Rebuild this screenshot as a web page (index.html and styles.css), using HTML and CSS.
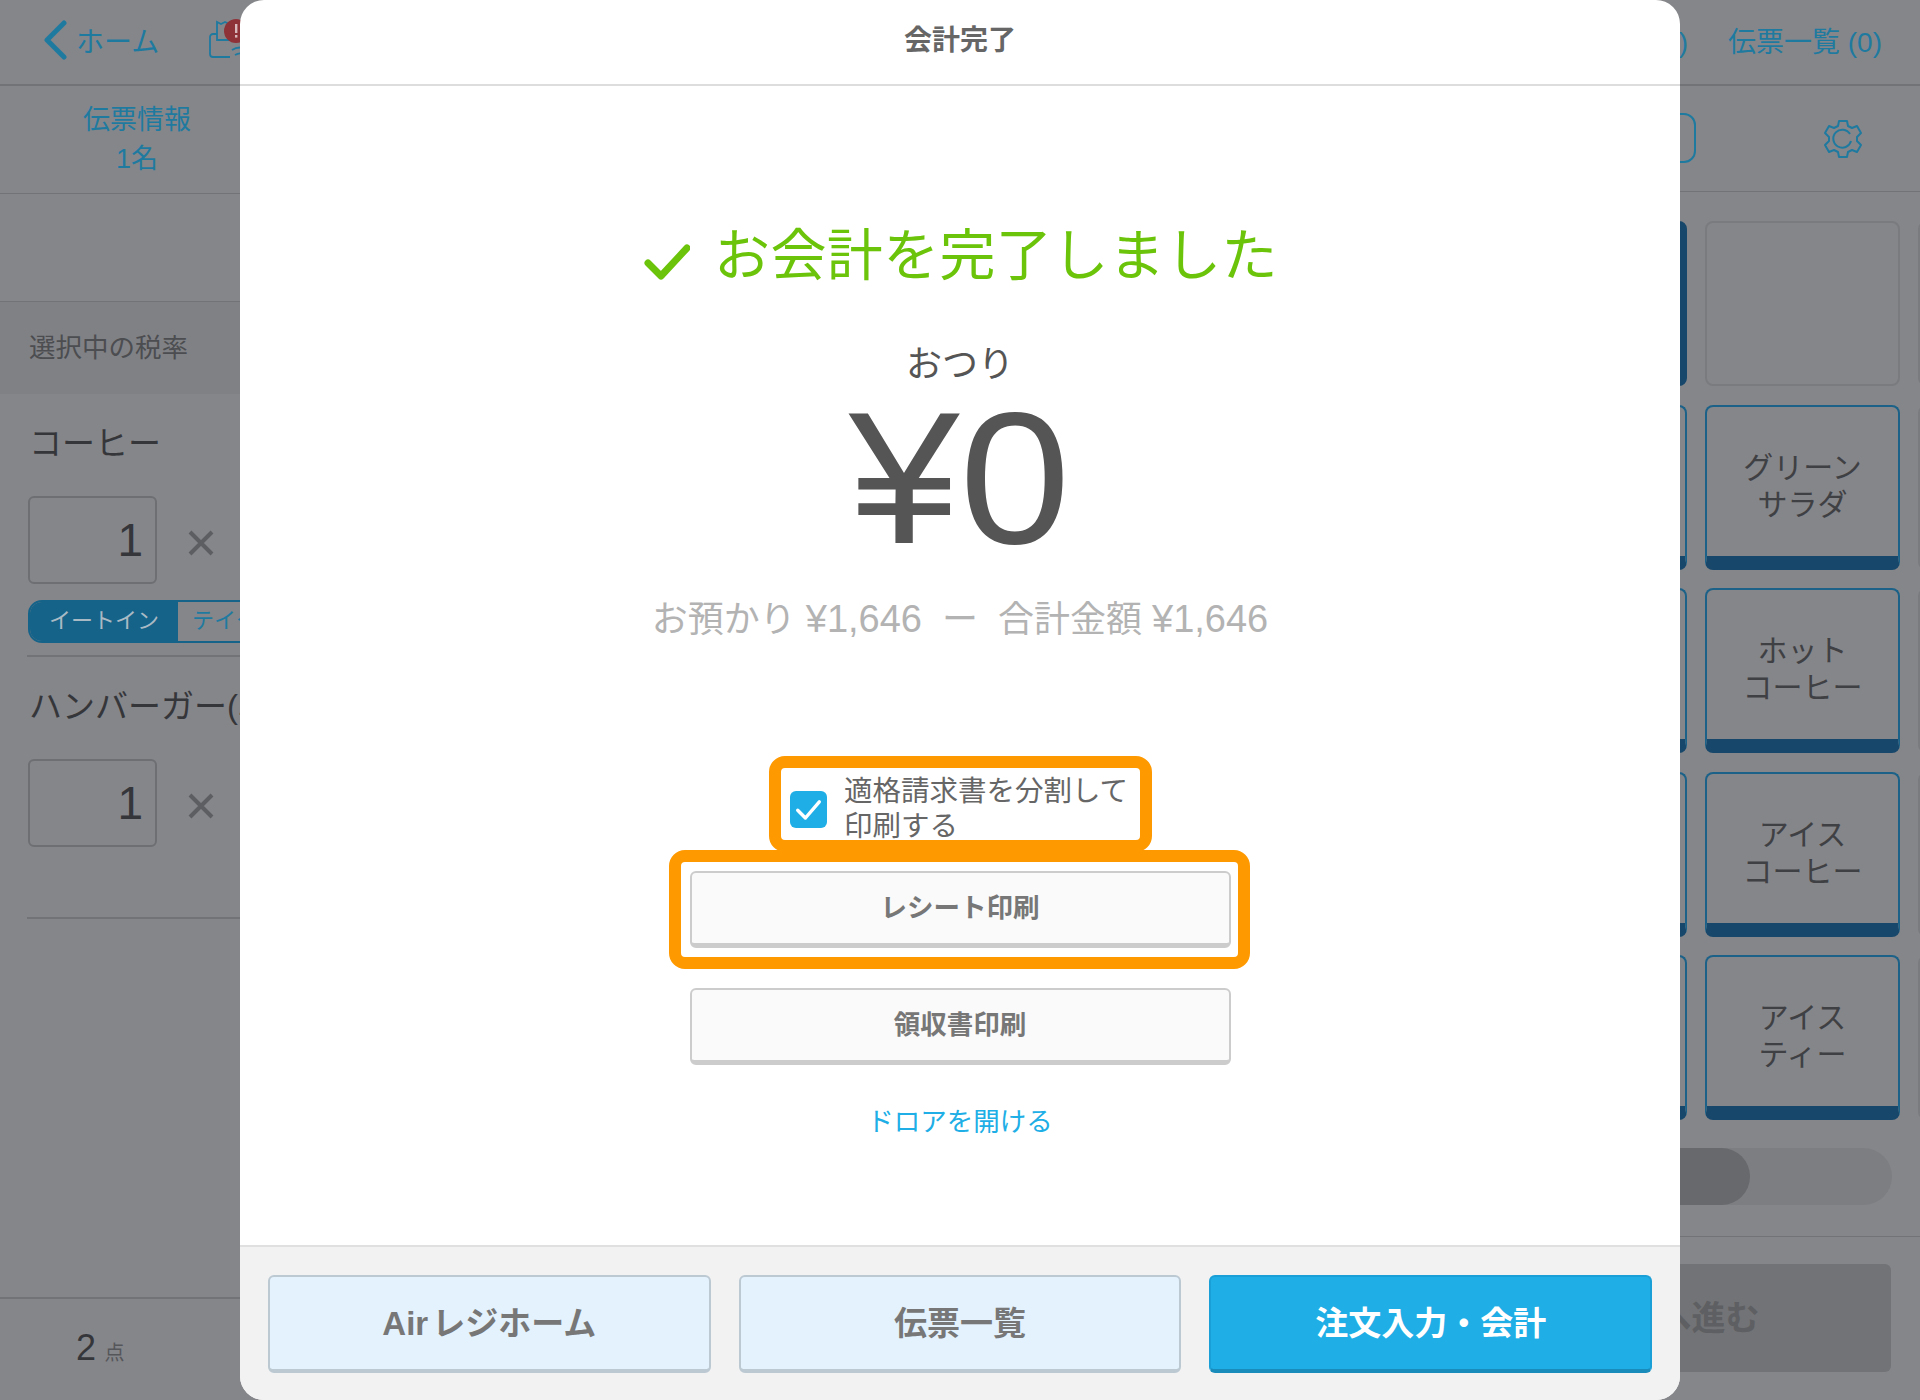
FILE: index.html
```html
<!DOCTYPE html>
<html lang="ja">
<head>
  <meta charset="UTF-8">
  <title>会計完了</title>
  <link rel="stylesheet" href="styles.css">
</head>
<body>

<div class="app">
  <header class="topbar">
    <div class="topbar-left">
      <svg class="back-icon" viewBox="0 0 26 40"><path d="M22 3 5 20l17 17" fill="none" stroke="#1f7aa0" stroke-width="5" stroke-linecap="round" stroke-linejoin="round"/></svg>
      <span class="home-link">ホーム</span>
      <svg class="printer-icon" viewBox="0 0 40 42">
        <path d="M9 15H5a3 3 0 0 0-3 3v17a3 3 0 0 0 3 3h17" fill="none" stroke="#1f7aa0" stroke-width="1.8"/>
        <path d="M9 21V3l4 2 4-2 4 2 4-2v18z" fill="none" stroke="#1f7aa0" stroke-width="1.8"/>
        <path d="M24 31a14 14 0 0 1 16 0M27 36a9 9 0 0 1 10 0" fill="none" stroke="#1f7aa0" stroke-width="1.8"/>
        <circle cx="28" cy="12" r="12" fill="#8f3237"/>
        <rect x="27" y="5" width="2.4" height="9" fill="#d9b9bb"/>
        <rect x="27" y="16" width="2.4" height="2.6" fill="#d9b9bb"/>
      </svg>
    </div>
    <div class="topbar-right">
      <span class="top-link">保留 (0)</span>
      <span class="top-link">伝票一覧 (0)</span>
    </div>
  </header>

  <div class="main">
    <section class="order">
      <div class="order-info">伝票情報<br>1名</div>
      <div class="order-blank"></div>
      <div class="tax-row">選択中の税率</div>

      <div class="item">
        <div class="item-name">コーヒー</div>
        <div class="item-qty">
          <div class="qty-box">1</div>
          <svg class="remove-icon" viewBox="0 0 26 26"><path d="M2 2l22 22M24 2 2 24" stroke="#5d5e61" stroke-width="4"/></svg>
        </div>
        <div class="segment">
          <span class="segment-on">イートイン</span>
          <span class="segment-off">テイクアウト</span>
        </div>
      </div>

      <div class="item item-last">
        <div class="item-name">ハンバーガー(単品)</div>
        <div class="item-qty">
          <div class="qty-box">1</div>
          <svg class="remove-icon" viewBox="0 0 26 26"><path d="M2 2l22 22M24 2 2 24" stroke="#5d5e61" stroke-width="4"/></svg>
        </div>
      </div>

      <div class="order-total"><span class="total-num">2</span> <span class="total-unit">点</span></div>
    </section>

    <section class="menu">
      <div class="menu-head">
        <div class="category-tab"></div>
        <svg class="gear-icon" viewBox="0 0 44 40">
          <path d="M18 2h8l1 5 4 2 5-2 4 7-4 4v4l4 4-4 7-5-2-4 2-1 5h-8l-1-5-4-2-5 2-4-7 4-4v-4L4 14l4-7 5 2 4-2z" fill="none" stroke="#1f7aa0" stroke-width="2" stroke-linejoin="round"/>
          <path d="M29 15a9 9 0 1 0 1 7" fill="none" stroke="#1f7aa0" stroke-width="2"/>
        </svg>
      </div>
      <div class="menu-grid">
        <div class="card card-solid"></div>
        <div class="card card-empty"></div>
        <div class="card card-empty"></div>
        <div class="card"></div>
        <div class="card">グリーン<br>サラダ</div>
        <div class="card card-empty"></div>
        <div class="card"></div>
        <div class="card">ホット<br>コーヒー</div>
        <div class="card card-empty"></div>
        <div class="card"></div>
        <div class="card">アイス<br>コーヒー</div>
        <div class="card card-empty"></div>
        <div class="card"></div>
        <div class="card">アイス<br>ティー</div>
        <div class="card card-empty"></div>
      </div>
      <div class="pager"><div class="pager-thumb"></div></div>
      <div class="menu-foot">
        <div class="next-btn">会計へ進む</div>
      </div>
    </section>
  </div>
</div>

<div class="modal">
  <div class="modal-title">会計完了</div>

  <div class="modal-body">
    <div class="done-msg">
      <svg class="done-icon" viewBox="0 0 48 38"><path d="M6 20 19 33 45 5" fill="none" stroke="#6cc40a" stroke-width="7" stroke-linecap="round" stroke-linejoin="round"/></svg>
      <span>お会計を完了しました</span>
    </div>
    <div class="change-label">おつり</div>
    <div class="change-amount">¥0</div>
    <div class="change-calc">お預かり <span class="calc-num">¥1,646</span> &nbsp;ー&nbsp; 合計金額 <span class="calc-num">¥1,646</span></div>

    <label class="split-row framed">
      <span class="checkbox">
        <svg viewBox="0 0 24 24"><path d="M5 12.5 10 17.5 19 7" fill="none" stroke="#fff" stroke-width="2.2" stroke-linecap="round" stroke-linejoin="round"/></svg>
      </span>
      <span class="split-text">適格請求書を分割して<br>印刷する</span>
    </label>

    <button class="print-btn print-first framed-btn">レシート印刷</button>
    <button class="print-btn print-second">領収書印刷</button>
    <div class="drawer-link">ドロアを開ける</div>
  </div>

  <div class="modal-foot">
    <button class="foot-btn">Air レジホーム</button>
    <button class="foot-btn">伝票一覧</button>
    <button class="foot-btn foot-primary">注文入力・会計</button>
  </div>
</div>

</body>
</html>
```

FILE: styles.css
```css
* {
  box-sizing: border-box;
}

html, body {
  margin: 0;
  height: 1400px;
  overflow: hidden;
}

body {
  position: relative;
  font-family: "Liberation Sans", "Noto Sans CJK JP", sans-serif;
  background-color: #85868a;
  color: #35363a;
}

/* background app, already dimmed by the modal */
.app {
  height: 1400px;
  display: flex;
  flex-direction: column;
}

.topbar {
  height: 86px;
  flex: none;
  display: flex;
  align-items: center;
  justify-content: space-between;
  padding-bottom: 5px;
  border-bottom: 2px solid #727377;
  color: #1f7aa0;
  font-size: 28px;
}

.topbar-left {
  display: flex;
  align-items: center;
  padding-left: 42px;
}

.back-icon {
  width: 26px;
  height: 40px;
}

.home-link {
  margin-left: 8px;
  width: 132px;
}

.printer-icon {
  width: 40px;
  height: 42px;
}

.topbar-right {
  display: flex;
  gap: 40px;
  padding-right: 38px;
}

.main {
  flex: 1;
  display: flex;
}

.order {
  width: 1472px;
  flex: none;
  display: flex;
  flex-direction: column;
}

.order-info {
  height: 107px;
  width: 274px;
  display: flex;
  flex-direction: column;
  justify-content: center;
  text-align: center;
  font-size: 27px;
  line-height: 39px;
  color: #1f7aa0;
  padding-top: 1px;
}

.order-blank {
  height: 109px;
  border-top: 1px solid #727377;
  border-bottom: 1px solid #727377;
}

.tax-row {
  height: 92px;
  line-height: 92px;
  padding-left: 29px;
  font-size: 26.5px;
  background-color: #808185;
  color: #4c4d50;
}

.item {
  margin-left: 27px;
  border-bottom: 2px solid #727377;
  height: 263px;
}

.item-last {
  height: 262px;
  margin-bottom: auto;
}

.item-name {
  font-size: 33px;
  line-height: 46px;
  padding: 27px 0 0 2px;
  height: 102px;
  white-space: nowrap;
}

.item-qty {
  display: flex;
  align-items: center;
  height: 88px;
  padding-left: 1px;
}

.qty-box {
  width: 129px;
  height: 88px;
  border: 2px solid #6e6f73;
  border-radius: 6px;
  text-align: right;
  padding-right: 12px;
  font-size: 46px;
  line-height: 84px;
}

.remove-icon {
  width: 26px;
  height: 26px;
  margin: 5px 0 0 31px;
}

.segment {
  display: flex;
  margin-top: 16px;
  margin-left: 1px;
  height: 43px;
  width: 360px;
  font-size: 22px;
  line-height: 38px;
  border: 2px solid #156389;
  border-radius: 14px;
  overflow: hidden;
}

.segment-on {
  width: 148px;
  text-align: center;
  background-color: #156389;
  color: #a9bac4;
}

.segment-off {
  flex: 1;
  padding-left: 14px;
  color: #1f7aa0;
}

.order-total {
  height: 103px;
  border-top: 2px solid #727377;
  padding: 28px 0 0 76px;
}

.total-num {
  font-size: 36px;
  margin-right: 4px;
}

.total-unit {
  font-size: 20px;
  color: #55565a;
}

.menu {
  flex: 1;
  min-width: 0;
  display: flex;
  flex-direction: column;
  overflow: hidden;
}

.menu-head {
  height: 106px;
  flex: none;
  position: relative;
  display: flex;
  align-items: center;
  justify-content: flex-end;
  padding-right: 55px;
  border-bottom: 1px solid #727377;
}

.category-tab {
  position: absolute;
  right: 224px;
  top: 27px;
  width: 200px;
  height: 50px;
  border: 2px solid #1f7aa0;
  border-radius: 12px;
}

.gear-icon {
  width: 44px;
  height: 40px;
}

.menu-grid {
  display: grid;
  grid-template-columns: repeat(3, 195px);
  grid-auto-rows: 165px;
  gap: 18.5px 18px;
  margin: 29px 0 0 20px;
}

.card {
  display: flex;
  align-items: center;
  justify-content: center;
  text-align: center;
  padding-top: 9px;
  font-size: 30px;
  line-height: 37px;
  color: #3f4043;
  border: 2px solid #1c6288;
  border-bottom: 14px solid #17476a;
  border-radius: 8px;
}

.card-empty {
  border: 2px solid #7a7b7f;
}

.card-solid {
  background-color: #17476a;
  border-color: #17476a;
}

.pager {
  margin: 28px 28px 0 20px;
  height: 57px;
  background-color: #7d7e82;
  border-radius: 29px;
}

.pager-thumb {
  width: 258px;
  height: 57px;
  background-color: #68696d;
  border-radius: 29px;
}

.menu-foot {
  margin-top: 31px;
  border-top: 1px solid #727377;
  padding: 27px 29px 0 0;
  display: flex;
  justify-content: flex-end;
}

.next-btn {
  width: 438px;
  height: 108px;
  padding-right: 14px;
  border-radius: 6px;
  background-color: #727376;
  color: #5e5f62;
  font-size: 34px;
  font-weight: bold;
  line-height: 108px;
  text-align: center;
}

/* modal */
.modal {
  position: absolute;
  left: 240px;
  top: 0;
  width: 1440px;
  height: 1400px;
  display: flex;
  flex-direction: column;
  background-color: #fff;
  border-radius: 24px;
  overflow: hidden;
}

.modal-title {
  height: 86px;
  flex: none;
  border-bottom: 2px solid #ddd;
  text-align: center;
  font-size: 28px;
  font-weight: bold;
  line-height: 81px;
  color: #666;
}

.modal-body {
  flex: 1;
  display: flex;
  flex-direction: column;
  align-items: center;
}

.done-msg {
  display: flex;
  align-items: center;
  margin-top: 132px;
  height: 76px;
  font-size: 56px;
  line-height: 76px;
  letter-spacing: 0.4px;
  color: #6cc40a;
  white-space: nowrap;
}

.done-icon {
  width: 48px;
  height: 38px;
  margin: 12px 24px 0 0;
}

.change-label {
  margin-top: 49px;
  font-size: 36px;
  line-height: 44px;
  color: #555;
}

.change-amount {
  margin-top: 11px;
  font-size: 188px;
  line-height: 160px;
  color: #555;
  transform: scaleX(1.06);
}

.change-calc {
  margin-top: 39px;
  height: 44px;
  font-size: 36px;
  line-height: 44px;
  color: #b3b3b3;
  white-space: nowrap;
}

.calc-num {
  font-size: 38px;
}

.split-row {
  position: relative;
  display: flex;
  align-items: center;
  margin: 133px 2px 0 0;
  height: 70px;
}

.framed::after,
.framed-btn::after {
  content: "";
  position: absolute;
  border: 12px solid #ff9900;
  border-radius: 16px;
}

.framed::after {
  inset: -18px -24px -8px -21px;
}

.framed-btn::after {
  inset: -23px -21px -26px -23px;
}

.checkbox {
  width: 37px;
  height: 37px;
  flex: none;
  background-color: #20aee6;
  border-radius: 6px;
  margin-right: 17px;
}

.checkbox svg {
  display: block;
  width: 37px;
  height: 37px;
}

.split-text {
  font-size: 28.5px;
  line-height: 35px;
  color: #666;
  white-space: nowrap;
}

.print-btn {
  width: 541px;
  height: 77px;
  padding-bottom: 7px;
  background-color: #fafafa;
  border: 2px solid #ccc;
  border-bottom-width: 5px;
  border-radius: 6px;
  font-family: inherit;
  font-size: 26.5px;
  font-weight: bold;
  color: #777;
}

.print-first {
  position: relative;
  margin-top: 27px;
}

.print-second {
  margin-top: 40px;
}

.drawer-link {
  margin-top: 39px;
  font-size: 26.5px;
  line-height: 36px;
  color: #20aee6;
}

.modal-foot {
  height: 155px;
  flex: none;
  display: flex;
  gap: 28px;
  padding: 28px 28px 0;
  background-color: #f2f2f2;
  border-top: 2px solid #e0e0e0;
}

.foot-btn {
  flex: 1;
  height: 98px;
  padding-bottom: 6px;
  background-color: #e3f2fd;
  border: 2px solid #bcc9d3;
  border-bottom-width: 4px;
  border-radius: 6px;
  font-family: inherit;
  font-size: 33px;
  font-weight: bold;
  word-spacing: -5px;
  color: #777;
}

.foot-primary {
  background-color: #20aee6;
  border-color: #1a9fd6;
  border-bottom-color: #1a8cbc;
  color: #fff;
}
```
